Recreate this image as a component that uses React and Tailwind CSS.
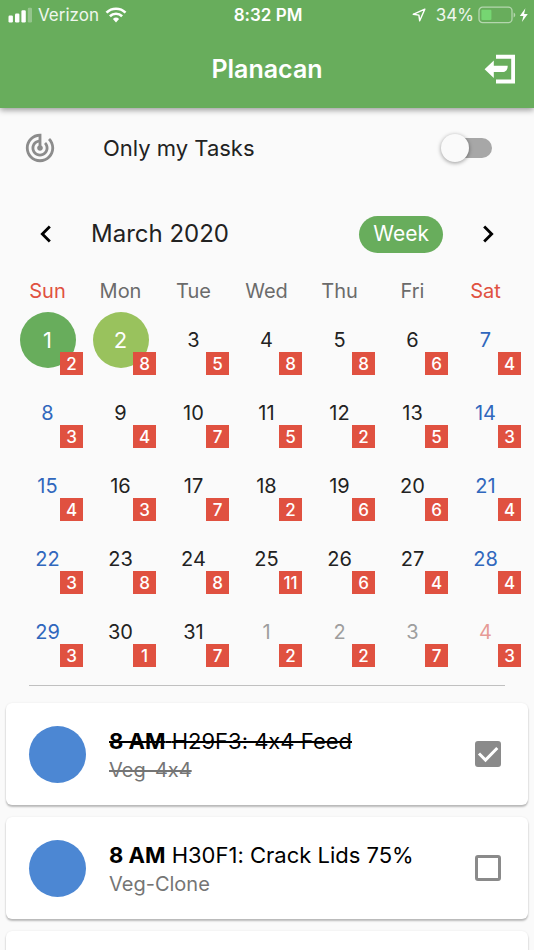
import { MdChevronLeft, MdChevronRight, MdTrackChanges } from "react-icons/md";

const WEEKDAYS = ["Sun", "Mon", "Tue", "Wed", "Thu", "Fri", "Sat"];

// Each day is [date, number of tasks].
const WEEKS = [
  [[1, 2], [2, 8], [3, 5], [4, 8], [5, 8], [6, 6], [7, 4]],
  [[8, 3], [9, 4], [10, 7], [11, 5], [12, 2], [13, 5], [14, 3]],
  [[15, 4], [16, 3], [17, 7], [18, 2], [19, 6], [20, 6], [21, 4]],
  [[22, 3], [23, 8], [24, 8], [25, 11], [26, 6], [27, 4], [28, 4]],
  [[29, 3], [30, 1], [31, 7], [1, 2], [2, 2], [3, 7], [4, 3]],
];

const TASKS = [
  { id: "feed", time: "8 AM", title: "H29F3: 4x4 Feed", place: "Veg-4x4", done: true },
  { id: "lids", time: "8 AM", title: "H30F1: Crack Lids 75%", place: "Veg-Clone", done: false },
];

function dayStyle(week, column) {
  if (week === 0 && column === 0) return "bg-[#68ad5c] text-[22px] text-white";
  if (week === 0 && column === 1) return "bg-[#99c25d] text-[22px] text-white";
  if (week === 4 && column === 6) return "text-xl text-[#e69a96]";
  if (week === 4 && column > 2) return "text-xl text-[#9e9e9e]";
  if (column === 0 || column === 6) return "text-xl text-[#3067bd]";
  return "text-xl text-[#222]";
}

function StatusBar() {
  return (
    <div className="grid h-[30px] grid-cols-3 items-center pr-1.5 pl-2 text-[17px] leading-5 text-white">
      <div className="flex items-center gap-1.5">
        <svg width="24" height="16" viewBox="0 0 24 16" fill="currentColor" aria-hidden="true">
          <rect x="0.5" y="8.5" width="4.4" height="7" rx="1.2" />
          <rect x="7" y="6.5" width="4.4" height="9" rx="1.2" />
          <rect x="13.4" y="3.3" width="4.4" height="12.2" rx="1.2" />
          <rect x="19.8" y="0.8" width="4.2" height="14.7" rx="1.2" opacity="0.3" />
        </svg>
        <span className="text-white/90">Verizon</span>
        <svg width="22" height="16" viewBox="0 0 22 16" fill="none" stroke="currentColor" aria-hidden="true">
          <path d="M1.5 5.6a13.6 13.6 0 0 1 19 0" strokeWidth="2.7" />
          <path d="M4.9 9.2a8.7 8.7 0 0 1 12.2 0" strokeWidth="2.6" />
          <path d="M7.9 12a4.5 4.5 0 0 1 6.2 0L11 15.4z" fill="currentColor" stroke="none" />
        </svg>
      </div>
      <div className="text-center font-semibold">8:32 PM</div>
      <div className="flex items-center justify-end whitespace-nowrap">
        <svg className="mr-2.5" width="14" height="14" viewBox="0 0 14 14" fill="none" stroke="currentColor" strokeWidth="1.4" strokeLinejoin="round" aria-hidden="true">
          <path d="M12.8 1.2 1.2 6.3l5.7.8.8 5.7z" />
        </svg>
        <span className="text-white/90">34%</span>
        <svg className="ml-1" width="50" height="18" viewBox="0 0 50 18" aria-hidden="true">
          <rect x="1" y="1.2" width="33" height="15.4" rx="3.6" fill="none" stroke="#fff" strokeOpacity="0.5" strokeWidth="1.3" />
          <path d="M35.6 6.4c2.2.7 2.2 4.3 0 5z" fill="#fff" fillOpacity="0.5" />
          <rect x="3.4" y="3.7" width="10" height="10.4" rx="1" fill="#76d672" />
          <path d="M47.4 2.2 41.800 10h3.600l-1.500 6L49.800 7.900h-3.700z" fill="#fff" />
        </svg>
      </div>
    </div>
  );
}

function AppBar() {
  return (
    <div className="grid h-[78px] grid-cols-[1fr_auto_1fr] items-center px-[19px]">
      <h1 className="col-start-2 text-[25px] leading-8 font-semibold text-white">Planacan</h1>
      <button type="button" aria-label="Log out" className="justify-self-end text-white">
        <svg width="31" height="30" viewBox="0 0 31 30" fill="currentColor" aria-hidden="true">
          <path d="M12 .8h19v28.600H12v-3.900h15.200V4.700H12z" />
          <path d="M.6 15.200 9.800 6.500v5.200h13.900c0 4-1.700 6.300-5.500 6.300H9.800v6z" />
        </svg>
      </button>
    </div>
  );
}

function Calendar() {
  return (
    <div className="pr-3 pl-[11px]">
      <table className="w-full table-fixed border-collapse">
        <thead>
          <tr>
            {WEEKDAYS.map((name, column) => (
              <th
                key={name}
                scope="col"
                className={`p-0 pb-0.5 text-xl leading-[22px] font-normal ${column % 6 === 0 ? "text-[#e05140]" : "text-[#6b6b6b]"}`}
              >
                {name}
              </th>
            ))}
          </tr>
        </thead>
        <tbody>
          {WEEKS.map((days, week) => (
            <tr key={week}>
              {days.map(([date, count], column) => (
                <td key={column} className="p-0">
                  <div className="relative flex h-[73px] justify-center pt-2">
                    <button
                      type="button"
                      className={`flex size-14 items-center justify-center rounded-full ${dayStyle(week, column)}`}
                    >
                      {date}
                    </button>
                    <span className="absolute right-px bottom-0.5 flex size-[23px] items-center justify-center bg-[#e05140] text-[17px] leading-5 font-medium text-white">
                      {count}
                    </span>
                  </div>
                </td>
              ))}
            </tr>
          ))}
        </tbody>
      </table>
    </div>
  );
}

function TaskCard({ task }) {
  const strike = task.done ? "line-through decoration-2" : "";
  const strikeThin = task.done ? "line-through" : "";
  return (
    <li className="flex h-[102px] items-center rounded-md bg-white pr-[27px] pl-[23px] shadow-[0_2px_2px_rgba(0,0,0,0.25),0_0_2px_rgba(0,0,0,0.08)]">
      <span className="size-[57px] shrink-0 rounded-full bg-[#4c87d3]" />
      <label htmlFor={task.id} className="ml-[23px] flex-1 pt-0.5">
        <span className={`block text-[22px] leading-[30px] text-black ${strike}`}>
          <b className="font-bold">{task.time}</b> {task.title}
        </span>
        <span className={`block text-xl leading-7 text-[#757575] ${strikeThin}`}>{task.place}</span>
      </label>
      <span className="grid size-[26px] shrink-0">
        <input
          id={task.id}
          type="checkbox"
          defaultChecked={task.done}
          className="peer col-start-1 row-start-1 size-[26px] appearance-none rounded-[3px] border-3 border-[#8a8a8a] checked:bg-[#8a8a8a]"
        />
        <svg
          viewBox="0 0 26 26"
          className="pointer-events-none col-start-1 row-start-1 hidden size-[26px] peer-checked:block"
          fill="none"
          stroke="#fff"
          strokeWidth="3"
          aria-hidden="true"
        >
          <path d="m4 12.500 6.500 6.500L22.300 7" />
        </svg>
      </span>
    </li>
  );
}

export default function App() {
  return (
    <div className="flex h-screen flex-col overflow-hidden bg-[#fafafa] font-['Inter','Liberation_Sans',sans-serif] [font-feature-settings:'calt'_0]">
      <header className="shrink-0 bg-[#68ad5c] shadow-[0_2px_6px_rgba(0,0,0,0.4)]">
        <StatusBar />
        <AppBar />
      </header>
      <main className="min-h-0 flex-1 overflow-hidden">
        <div className="flex h-20 items-center pr-[42px] pl-[23px]">
          <MdTrackChanges className="size-[34px] text-[#8c8c8c]" aria-hidden="true" />
          <label htmlFor="mine" className="ml-[46px] flex-1 text-[22px] leading-7 text-[#222]">
            Only my Tasks
          </label>
          <input
            id="mine"
            type="checkbox"
            role="switch"
            className="flex h-5 w-[47px] appearance-none items-center rounded-full bg-[#a7a7a7] before:-ml-1 before:size-7 before:shrink-0 before:rounded-full before:bg-[#fafafa] before:shadow-[0_1px_4px_rgba(0,0,0,0.4)] checked:bg-[#a4ce9d] checked:before:ml-6 checked:before:bg-[#68ad5c]"
          />
        </div>
        <div className="flex h-[92px] items-center px-[29px]">
          <button type="button" aria-label="Previous month">
            <MdChevronLeft className="size-[34px] text-black" />
          </button>
          <h2 className="ml-7 flex-1 text-[24px] leading-8 text-[#222]">March 2020</h2>
          <button type="button" className="h-[37px] rounded-full bg-[#68ad5c] px-3.5 text-[21px] text-white">
            Week
          </button>
          <button type="button" aria-label="Next month" className="ml-7">
            <MdChevronRight className="size-[34px] text-black" />
          </button>
        </div>
        <Calendar />
        <hr className="mx-[29px] mt-4 border-t border-[#c0c0c0]" />
        <ul className="mt-[17px] flex flex-col gap-3 px-1.5">
          {TASKS.map((task) => (
            <TaskCard key={task.id} task={task} />
          ))}
          <li className="h-[102px] rounded-md bg-white shadow-[0_2px_2px_rgba(0,0,0,0.25),0_0_2px_rgba(0,0,0,0.08)]" />
        </ul>
      </main>
    </div>
  );
}
